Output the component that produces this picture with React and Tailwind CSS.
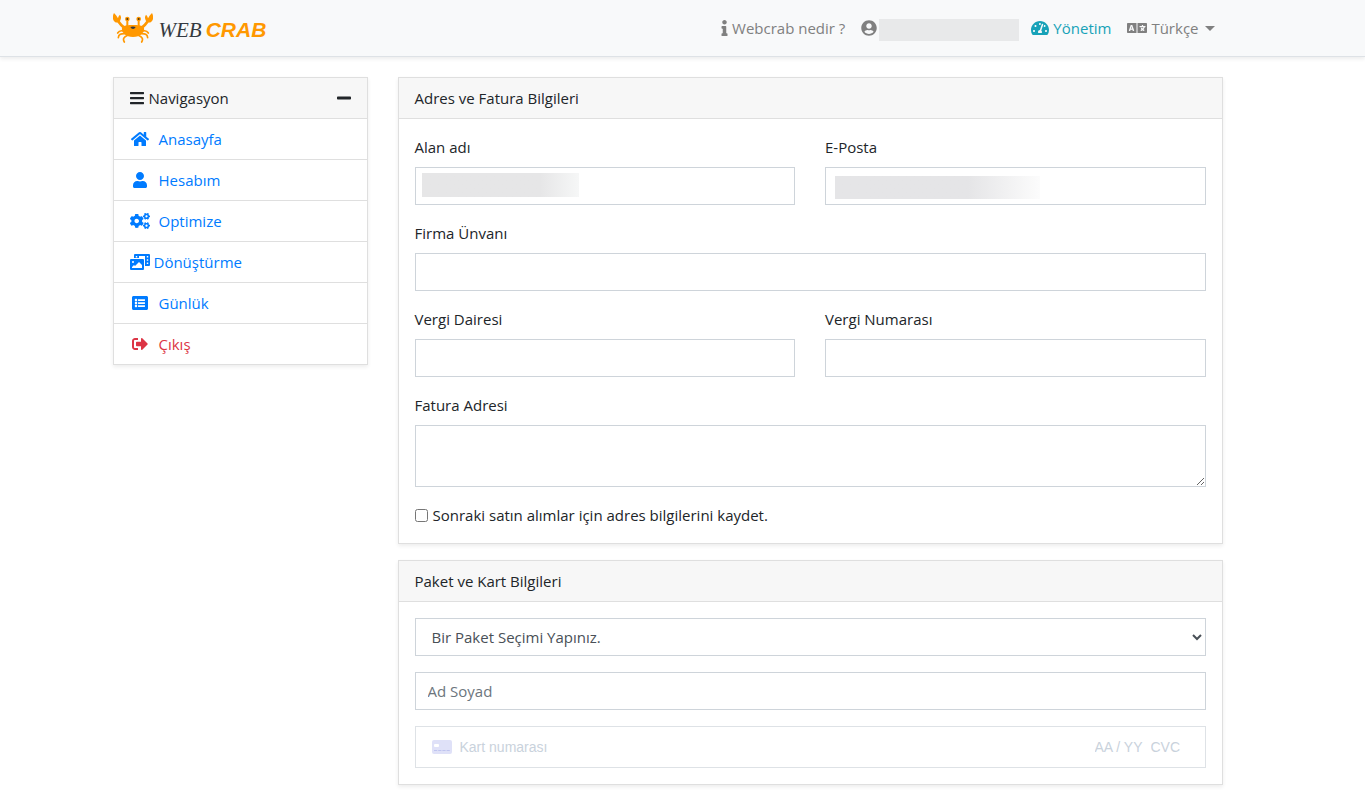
import {
  FaBars, FaCogs, FaHome, FaInfo, FaLanguage, FaListAlt, FaMinus,
  FaPhotoVideo, FaSignOutAlt, FaTachometerAlt, FaUser, FaUserCircle,
} from "react-icons/fa";

const control =
  "block w-full border border-[#ced4da] bg-white px-3 text-[#495057] outline-none focus:border-[#80bdff]";

function Crab() {
  return (
    <svg viewBox="0 0 120 90" className="h-[30px] w-10" fill="#ff9800" aria-hidden="true">
      <g fill="none" stroke="#ff9800" strokeLinecap="round" strokeLinejoin="round">
        <path d="M15 24 Q22 35 36 46 M105 24 Q98 35 84 46" strokeWidth="8" />
        <path d="M43 20 V42 M77 20 V42" strokeWidth="6" />
        <path d="M34 55 Q20 50 14 60 M86 55 Q100 50 106 60" strokeWidth="5" />
        <path d="M38 62 Q17 60 16 74 M82 62 Q103 60 104 74" strokeWidth="5" />
        <path d="M44 67 Q26 74 34 87 M76 67 Q94 74 86 87" strokeWidth="5" />
      </g>
      <path d="M3 0 C-2 9 -2 20 5 26 C10 31 19 29 22 22 C25 16 25 10 21 5 C18 8 16 11 15 16 C12 10 8 5 3 0 Z" />
      <path d="M117 0 C122 9 122 20 115 26 C110 31 101 29 98 22 C95 16 95 10 99 5 C102 8 104 11 105 16 C108 10 112 5 117 0 Z" />
      <path d="M27 44 C33 36 46 36 60 36 C74 36 87 36 93 44 C96 56 82 72 60 72 C38 72 24 56 27 44 Z" />
      <circle cx="43" cy="18" r="7" />
      <circle cx="77" cy="18" r="7" />
      <circle cx="43" cy="18" r="3" fill="#4a3414" />
      <circle cx="77" cy="18" r="3" fill="#4a3414" />
      <path d="M52 42 Q60 39 68 42 Q65 48 60 48 Q55 48 52 42 Z" fill="#343a40" />
    </svg>
  );
}

function Card({ title, children }) {
  return (
    <section className="border border-[#dfdfdf] bg-white shadow-[0_2px_4px_rgba(0,0,0,0.075)]">
      <h2 className="border-b border-[#dfdfdf] bg-[#f7f7f7] px-4 py-2">{title}</h2>
      <div className="flex flex-col gap-4 p-4">{children}</div>
    </section>
  );
}

function Field({ id, label, mask, children }) {
  return (
    <div>
      <label htmlFor={id} className="mb-2 block">{label}</label>
      <div className="relative">
        {children || <input id={id} type="text" className={`${control} h-[38px]`} />}
        {mask}
      </div>
    </div>
  );
}

const links = [
  { text: "Anasayfa", Icon: FaHome, size: "w-[18px]" },
  { text: "Hesabım", Icon: FaUser, size: "w-[14px]" },
  { text: "Optimize", Icon: FaCogs, size: "w-5" },
  { text: "Dönüştürme", Icon: FaPhotoVideo, size: "w-5", gap: "gap-1" },
  { text: "Günlük", Icon: FaListAlt, size: "w-4" },
  { text: "Çıkış", Icon: FaSignOutAlt, size: "w-4", color: "text-[#dc3545]" },
];

export default function App() {
  return (
    <div className="min-h-screen bg-white font-['Open_Sans','Noto_Sans',sans-serif] text-[15px] leading-6 text-[#212529]">
      <header className="border-b border-[#dee2e6] bg-[#f8f9fa] shadow-[0_2px_4px_rgba(0,0,0,0.075)]">
        <div className="mx-auto flex h-14 max-w-[1170px] items-center justify-between pr-[45px] pl-[15px]">
          <a href="#" className="flex items-center gap-[6px] text-[21px]">
            <Crab />
            <span className="flex items-baseline gap-1 pt-1">
              <span className="font-['Liberation_Serif',serif] italic text-[#343a40]">WEB</span>
              <span className="font-['Liberation_Sans',sans-serif] font-bold italic text-[#ff9800]">CRAB</span>
            </span>
          </a>
          <nav className="flex items-center gap-4 pr-2 text-[#808080]">
            <a href="#" className="flex items-center gap-1">
              <FaInfo className="h-4 w-[7px]" />Webcrab nedir ?
            </a>
            <div className="flex items-center gap-3">
              <a href="#" aria-label="Hesap" className="flex items-center gap-[2px]">
                <FaUserCircle className="size-4" />
                <span className="mt-1 h-[22px] w-[140px] bg-[#e8e9ea]" />
              </a>
              <a href="#" className="flex items-center gap-1 text-[#17a2b8]">
                <FaTachometerAlt className="h-4 w-[18px]" />Yönetim
              </a>
            </div>
            <button type="button" className="flex items-center gap-[6px]">
              <span className="flex items-center gap-1"><FaLanguage className="h-4 w-5" />Türkçe</span>
              <span className="border-x-5 border-t-5 border-x-transparent border-t-[#808080]" />
            </button>
          </nav>
        </div>
      </header>

      <div className="mx-auto grid max-w-[1170px] grid-cols-[255px_minmax(0,1fr)] items-start gap-[30px] pt-5 pr-[45px] pb-4 pl-[15px]">
        <aside className="border border-[#dfdfdf] shadow-[0_2px_4px_rgba(0,0,0,0.075)]">
          <div className="flex items-center justify-between bg-[#f7f7f7] px-4 py-2">
            <h2 className="flex items-center gap-[5px]"><FaBars className="h-4 w-[14px]" />Navigasyon</h2>
            <button type="button" aria-label="Daralt"><FaMinus className="h-4 w-[14px]" /></button>
          </div>
          <ul>
            {links.map(({ text, Icon, size, gap = "gap-[9px]", color = "text-[#007bff]" }) => (
              <li key={text} className="border-t border-[#dfdfdf]">
                <a href="#" className={`flex items-center px-4 py-2 ${gap} ${color}`}>
                  <span className="flex w-5 justify-center"><Icon className={`h-4 ${size}`} /></span>
                  {text}
                </a>
              </li>
            ))}
          </ul>
        </aside>

        <main>
          <form className="flex flex-col gap-4">
            <Card title="Adres ve Fatura Bilgileri">
              <div className="grid grid-cols-2 gap-[30px]">
                <Field id="domain" label="Alan adı" mask={
                  <span className="absolute top-[6px] left-[7px] h-6 w-[157px] bg-linear-to-r from-[#e6e6e7] from-75% to-[#f6f7f7]" />
                } />
                <Field id="email" label="E-Posta" mask={
                  <span className="absolute top-[9px] left-[10px] h-[23px] w-[205px] bg-linear-to-r from-[#e5e5e7] from-65% to-[#fcfcfc]" />
                } />
              </div>
              <Field id="company" label="Firma Ünvanı" />
              <div className="grid grid-cols-2 gap-[30px]">
                <Field id="tax-office" label="Vergi Dairesi" />
                <Field id="tax-number" label="Vergi Numarası" />
              </div>
              <Field id="address" label="Fatura Adresi">
                <textarea id="address" className={`${control} h-[62px] py-[6px]`} />
              </Field>
              <div className="flex items-center gap-[5px]">
                <input id="save" type="checkbox" className="size-[13px]" />
                <label htmlFor="save">Sonraki satın alımlar için adres bilgilerini kaydet.</label>
              </div>
            </Card>

            <Card title="Paket ve Kart Bilgileri">
              <select aria-label="Paket" className={`${control} h-[38px]`}>
                <option>Bir Paket Seçimi Yapınız.</option>
              </select>
              <input type="text" aria-label="Ad Soyad" placeholder="Ad Soyad" className={`${control} h-[38px] placeholder:text-[#6c757d]`} />
              <div className="flex h-[42px] items-center gap-2 border border-[#dee2e6] px-4 font-['Liberation_Sans',sans-serif] text-[14px] text-[#495057]">
                <svg viewBox="0 0 20 14" className="h-[14px] w-5" aria-hidden="true">
                  <rect width="20" height="14" rx="2" fill="#dfe1f8" />
                  <rect x="2" y="4" width="5" height="3" rx="1" fill="#fff" />
                  <path d="M2 10.500H18" stroke="#bfc4ef" strokeDasharray="3.200 1" />
                </svg>
                <input aria-label="Kart numarası" placeholder="Kart numarası" className="min-w-0 flex-1 outline-none placeholder:text-[#c9d2dc]" />
                <input aria-label="Son kullanma tarihi" placeholder="AA / YY" className="w-12 outline-none placeholder:text-[#c9d2dc]" />
                <input aria-label="CVC" placeholder="CVC" className="w-[38px] outline-none placeholder:text-[#c9d2dc]" />
              </div>
            </Card>
          </form>
        </main>
      </div>
    </div>
  );
}
